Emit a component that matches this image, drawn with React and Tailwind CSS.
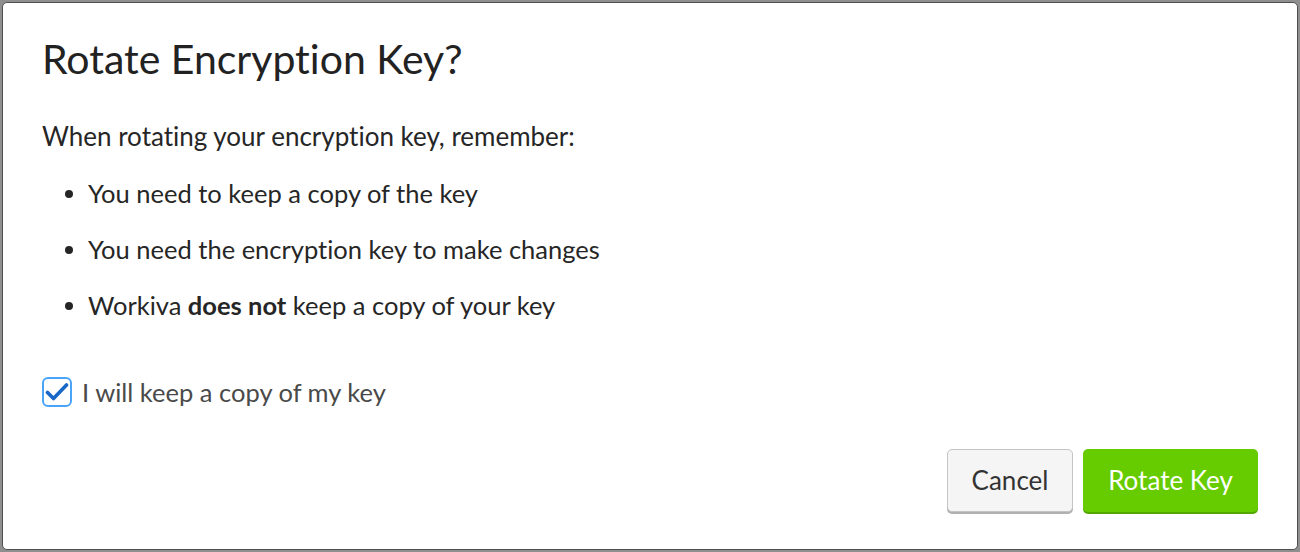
import React, { useState } from 'react'

const points = [
  <>You need to keep a copy of the key</>,
  <>You need the encryption key to make changes</>,
  <>
    Workiva <span className="font-bold">does not</span> keep a copy of your key
  </>,
]

function Checkbox({ checked, onChange }) {
  return (
    <button
      type="button"
      onClick={() => onChange(!checked)}
      className="flex h-[30px] w-[30px] items-center justify-center rounded-[6px] border-2 border-[#4aa5f8] bg-white"
    >
      {checked && (
        <svg width="24" height="20" viewBox="0 0 24 20" fill="none">
          <path
            d="M2.5 10.5 L8.5 16.5 L21.5 3"
            stroke="#1766c8"
            strokeWidth="3.6"
            strokeLinecap="round"
            strokeLinejoin="round"
          />
        </svg>
      )}
    </button>
  )
}

export default function App() {
  const [agreed, setAgreed] = useState(true)

  return (
    <div className="h-[552px] w-[1300px] bg-[#8f8f8f] p-[2px] font-['Lato','Noto_Sans',sans-serif] [font-variant-ligatures:none]">
      {/* ===== DIALOG ===== */}
      <div className="flex h-full flex-col rounded-[5px] border border-[#4f4f4f] bg-white px-[39px] text-[#262626]">
        <h2 className="pt-[31px] text-[41px] leading-[50px] font-normal text-[#222]">
          Rotate Encryption Key?
        </h2>

        <p className="mt-[38px] text-[26px] leading-[29px]">
          When rotating your encryption key, remember:
        </p>

        <ul className="mt-[28px] flex flex-col gap-[27px] pl-[23px]">
          {points.map((text, i) => (
            <li key={i} className="flex items-center gap-[15px] text-[25.5px] leading-[29px]">
              <span className="h-[8px] w-[8px] shrink-0 rounded-full bg-[#262626]" />
              <span>{text}</span>
            </li>
          ))}
        </ul>

        <label className="mt-[57px] flex items-center gap-[10px] text-[25.5px] leading-[29px] text-[#4a4a4a]">
          <Checkbox checked={agreed} onChange={setAgreed} />
          <span>I will keep a copy of my key</span>
        </label>

        {/* ===== ACTIONS ===== */}
        <div className="mt-[42px] flex justify-end gap-[10px]">
          <button className="h-[63px] w-[126px] rounded-[5px] border border-[#c4c4c4] bg-[#f5f5f5] text-[26px] text-[#333] shadow-[0_2px_0_#b0b0b0]">
            Cancel
          </button>
          <button
            disabled={!agreed}
            className="h-[63px] w-[175px] rounded-[5px] bg-[#66cc00] text-[26px] text-white shadow-[0_2px_0_#52a800] disabled:opacity-50"
          >
            Rotate Key
          </button>
        </div>
      </div>
    </div>
  )
}
